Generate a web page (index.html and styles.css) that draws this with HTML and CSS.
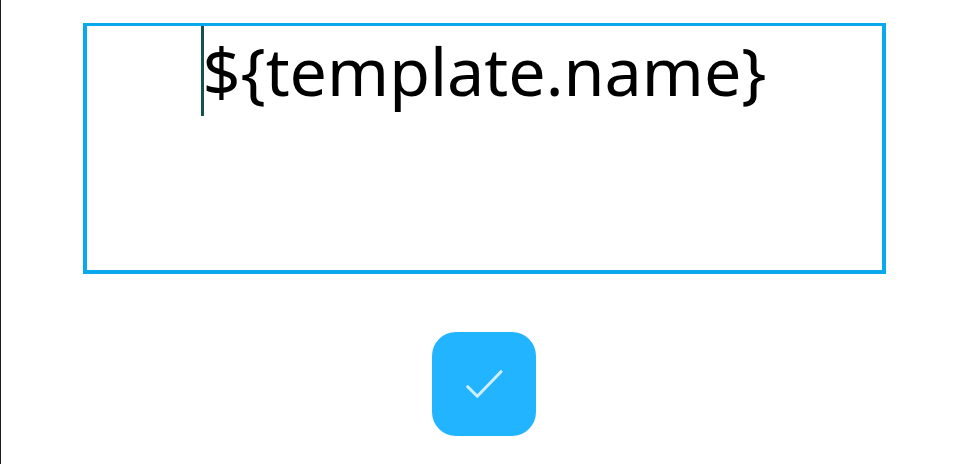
FILE: index.html

```html
<!DOCTYPE html>
<html lang="en">
<head>
  <meta charset="UTF-8">
  <title>Template name</title>
  <link rel="stylesheet" href="styles.css">
</head>
<body>
  <div class="dialog">
    <div class="nameBox">
      <span class="nameText">${template.name}</span>
    </div>
    <div class="okBtn">
      <svg class="okIcon" width="40" height="40" viewBox="0 0 40 40">
        <path d="M3.700 22.700 L13.300 32.300 L37 7.700" fill="none" stroke="#cfeeff" stroke-width="3" stroke-linecap="round" stroke-linejoin="round"/>
      </svg>
    </div>
  </div>
</body>
</html>
```

FILE: styles.css

```css
html, body {
  margin: 0;
  padding: 0;
  width: 100%;
  height: 100%;
  overflow: hidden;
  background-color: #fff;
  font-family: "Noto Sans", sans-serif;
}
.dialog {
  box-sizing: border-box;
  height: 464px;
  border-left: 1px solid #1c1c1c;
  padding: 23px 78px 0 82px;
  display: flex;
  flex-direction: column;
  align-items: center;
  gap: 58px;
}
.nameBox {
  box-sizing: border-box;
  width: 100%;
  height: 251px;
  border: 4px solid #0aa8ec;
  border-top-width: 3px;
  text-align: center;
  font-size: 66.4px;
  line-height: 88px;
  color: #000;
}
.nameText {
  position: relative;
  display: inline-block;
}
.nameText::before {
  content: "";
  position: absolute;
  left: -1px;
  top: 0;
  width: 2.5px;
  height: 90px;
  background-color: #14524b;
}
.okBtn {
  width: 104px;
  height: 104px;
  margin-right: 1px;
  border-radius: 24px;
  background-color: #22b4ff;
  display: flex;
  justify-content: center;
  align-items: center;
}
.okIcon {
  display: block;
}
```
